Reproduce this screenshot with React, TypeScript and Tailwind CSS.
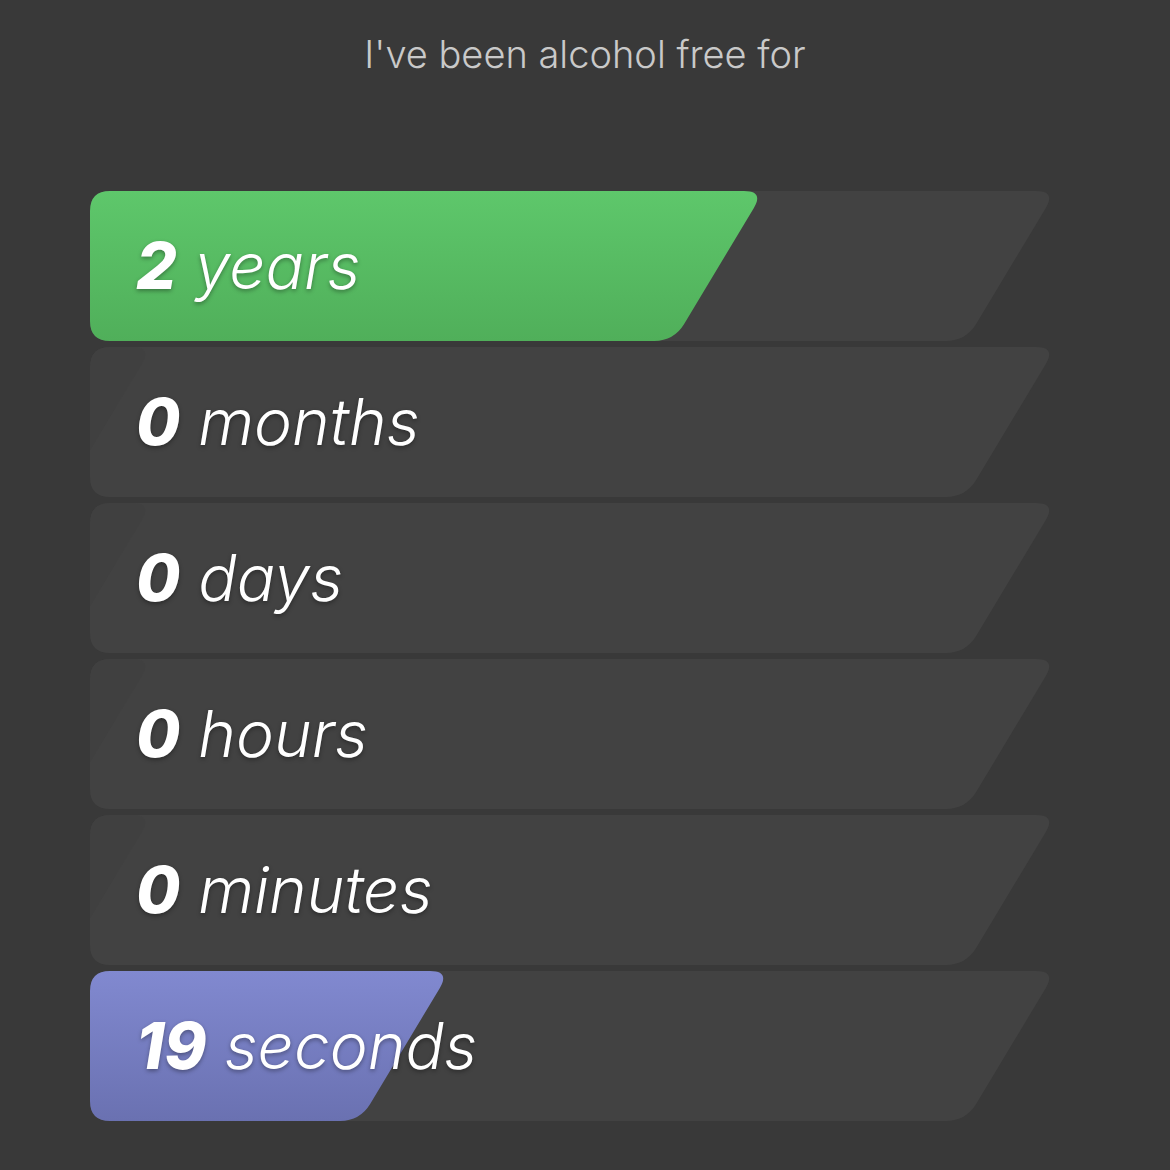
import React from 'react';

type Pt = [number, number];

// rounded polygon path (quadratic corners)
const roundedPath = (pts: Pt[], r: number) => {
  const n = pts.length;
  let d = '';
  for (let i = 0; i < n; i++) {
    const p = pts[i];
    const a = pts[(i - 1 + n) % n];
    const b = pts[(i + 1) % n];
    const ua = unit(a, p);
    const ub = unit(b, p);
    const s: Pt = [p[0] + ua[0] * r, p[1] + ua[1] * r];
    const e: Pt = [p[0] + ub[0] * r, p[1] + ub[1] * r];
    d += `${i === 0 ? 'M' : 'L'}${s[0]},${s[1]} Q${p[0]},${p[1]} ${e[0]},${e[1]} `;
  }
  return d + 'Z';
};

const unit = (to: Pt, from: Pt): Pt => {
  const dx = to[0] - from[0];
  const dy = to[1] - from[1];
  const l = Math.hypot(dx, dy);
  return [dx / l, dy / l];
};

const H = 150;
const SLANT = 90;

const shape = (w: number) =>
  roundedPath(
    [
      [0, 0],
      [w, 0],
      [w - SLANT, H],
      [0, H],
    ],
    20
  );

type Row = { value: string; unit: string; fill?: number; color?: 'green' | 'purple' };

const rows: Row[] = [
  { value: '2', unit: 'years', fill: 674, color: 'green' },
  { value: '0', unit: 'months' },
  { value: '0', unit: 'days' },
  { value: '0', unit: 'hours' },
  { value: '0', unit: 'minutes' },
  { value: '19', unit: 'seconds', fill: 360, color: 'purple' },
];

const BarRow = ({ row, idx }: { row: Row; idx: number }) => (
  <div className="relative h-[150px] w-[960px] flex items-center">
    <svg
      className="absolute left-0 top-0 overflow-visible"
      width={960}
      height={H}
      viewBox={`0 0 960 ${H}`}
    >
      <defs>
        <linearGradient id={`g-green-${idx}`} x1="0" y1="0" x2="0" y2="1">
          <stop offset="0" stopColor="#5ec76b" />
          <stop offset="1" stopColor="#50af5a" />
        </linearGradient>
        <linearGradient id={`g-purple-${idx}`} x1="0" y1="0" x2="0" y2="1">
          <stop offset="0" stopColor="#8189d0" />
          <stop offset="1" stopColor="#6a71b1" />
        </linearGradient>
        <clipPath id={`clip-${idx}`}>
          <path d={shape(966)} />
        </clipPath>
      </defs>
      <path d={shape(966)} fill="#424242" />
      {row.fill ? (
        <path d={shape(row.fill)} fill={`url(#g-${row.color}-${idx})`} />
      ) : (
        <path d={shape(62)} fill="#3f3f3f" opacity={0.6} clipPath={`url(#clip-${idx})`} />
      )}
    </svg>
    <div
      className="relative pl-[46px] text-[64px] italic text-white leading-none whitespace-nowrap [text-shadow:0_2px_4px_rgba(0,0,0,0.35)]"
      style={{ fontFamily: 'Inter, "Noto Sans", sans-serif' }}
    >
      <span className="font-extrabold">{row.value}</span>
      <span className="font-light"> {row.unit}</span>
    </div>
  </div>
);

export default function App() {
  return (
    <div
      className="w-[1170px] h-[1170px] bg-[#393939] flex flex-col"
      style={{ fontFamily: 'Inter, "Noto Sans", sans-serif' }}
    >
      <div className="pt-[32px] text-[38px] leading-[44px] font-light text-[#c9c9c9] text-center">
        I've been alcohol free for
      </div>
      <div className="mt-[115px] ml-[90px] flex flex-col gap-[6px]">
        {rows.map((r, i) => (
          <BarRow key={r.unit} row={r} idx={i} />
        ))}
      </div>
    </div>
  );
}
